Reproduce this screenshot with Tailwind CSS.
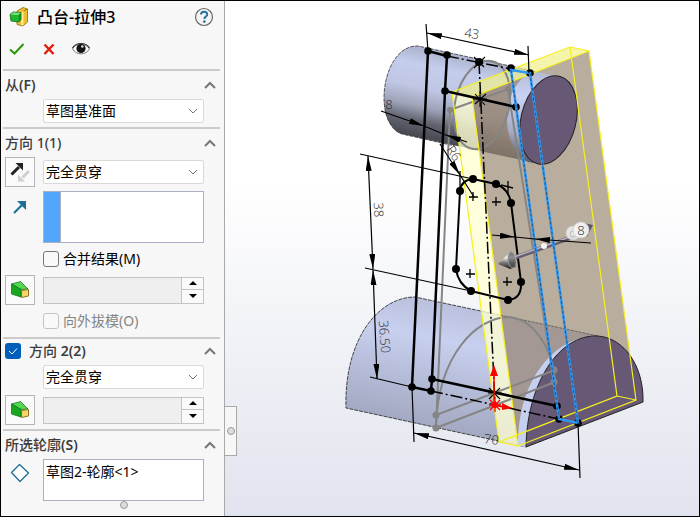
<!DOCTYPE html>
<html lang="zh-CN">
<head>
    <meta charset="UTF-8">
    <meta name="viewport" content="width=device-width, initial-scale=1.0">
    <title>凸台-拉伸3</title>
    <script src="https://cdn.jsdelivr.net/npm/@tailwindcss/browser@4"></script>
</head>
<body class="min-h-screen flex border border-black bg-white text-sm text-black font-['Noto_Sans','Noto_Sans_CJK_SC',sans-serif]">
    <!-- Property manager -->
    <aside class="w-56 shrink-0 flex flex-col bg-[#f7f7f7] border-r border-[#a9a9a9] pl-0.5 pr-1">
        <header class="h-8 flex items-center pl-1.5 pr-1.5">
            <svg class="size-5 shrink-0" viewBox="0 0 20 20">
                <path d="M8 4l6-3.500 4.500 1.500v13l-4.500 4-6-1.500V6z" fill="#f0bd2c" stroke="#8a6a10" stroke-width=".8"/>
                <path d="M12 6l2.500-2v14.500l-2.500-.5z" fill="#ffe790"/>
                <path d="M14.500 4l4-2" stroke="#8a6a10" stroke-width=".8"/>
                <path d="M1 7.500L4 5l8 .5v7L10 15l-8-1z" fill="#22b52e" stroke="#0d6b18" stroke-width=".8"/>
                <path d="M1.500 7.500L4 5.400l7.500.4L9.500 8z" fill="#7be27f"/>
                <path d="M9.600 8l2-2v6.500l-1.800 2z" fill="#148a20"/>
            </svg>
            <h1 class="ml-2 text-base font-medium">凸台-拉伸3</h1>
            <button class="ml-auto size-5" aria-label="帮助">
                <svg class="size-5" viewBox="0 0 20 20">
                    <circle cx="10" cy="10" r="8.500" fill="#f4f4f4" stroke="#666" stroke-width="1.200"/>
                    <path d="M7 7.600c0-3.800 6.200-3.800 6.200-.2 0 2.200-2.800 2.200-2.800 4.600" fill="none" stroke="#22739c" stroke-width="2"/>
                    <circle cx="10.300" cy="14.600" r="1.300" fill="#22739c"/>
                </svg>
            </button>
        </header>
        <div class="h-8 mb-1 flex items-center gap-3.5 pl-1">
            <button class="size-5" aria-label="确定">
                <svg class="size-5" viewBox="0 0 20 20"><path d="M3 10.500l4.500 4L16.500 5" fill="none" stroke="#2d9a0c" stroke-width="2"/></svg>
            </button>
            <button class="size-4" aria-label="取消">
                <svg class="size-4" viewBox="0 0 16 16"><path d="M3.500 3.500l9 9.500M12.500 3.500l-9 9.500" stroke="#e01b0c" stroke-width="2.400"/></svg>
            </button>
            <button class="size-5" aria-label="预览">
                <svg class="size-5" viewBox="0 0 20 20">
                    <path d="M1.500 10C5 3.500 15 3.500 18.500 10c-4 6.500-13 6.500-17 0z" fill="#fff" stroke="#777" stroke-width="1"/>
                    <path d="M1.500 9C5 3 15 3 18.500 9" fill="none" stroke="#333" stroke-width="1.200"/>
                    <circle cx="10" cy="9.500" r="4.600" fill="#151515"/>
                    <circle cx="11.300" cy="7.500" r="1.300" fill="#ddd"/>
                </svg>
            </button>
        </div>

        <section class="border-t-2 border-[#cbcbcb] pb-1 pl-0.5">
            <div class="h-7 flex items-center justify-between pr-1 text-[#3c3c3c]">
                <h2 class="font-medium"><label for="from">从<span class="font-semibold">(F)</span></label></h2>
                <button aria-label="折叠"><svg class="w-3 h-2" viewBox="0 0 12 8"><path d="M1 7l5-5 5 5" fill="none" stroke="#777" stroke-width="2"/></svg></button>
            </div>
            <div class="grid grid-cols-[30px_minmax(0,1fr)] gap-x-2 pr-4">
                <div class="col-start-2 relative">
                    <select id="from" class="appearance-none w-full h-6 px-0.5 bg-white border border-[#d9d9d9] rounded-xs"><option>草图基准面</option></select>
                    <svg class="absolute right-1.5 top-2 w-2.5 h-2 pointer-events-none" viewBox="0 0 10 8"><path d="M1 2l4 4 4-4" fill="none" stroke="#777"/></svg>
                </div>
            </div>
        </section>

        <section class="border-t-2 border-[#cbcbcb] pb-1 pl-0.5">
            <div class="h-7 flex items-center justify-between pr-1 text-[#3c3c3c]">
                <h2 class="font-medium">方向 1(1)</h2>
                <button aria-label="折叠"><svg class="w-3 h-2" viewBox="0 0 12 8"><path d="M1 7l5-5 5 5" fill="none" stroke="#777" stroke-width="2"/></svg></button>
            </div>
            <div class="grid grid-cols-[30px_minmax(0,1fr)] items-center gap-x-2 gap-y-1 pr-4">
                <button class="size-[30px] border border-[#b5b5b5] bg-[#fafafa] grid place-items-center" aria-label="反向">
                    <svg class="size-6" viewBox="0 0 24 24">
                        <path d="M21 11l-6.500 6.500" stroke="#d0d0d0" stroke-width="3"/>
                        <path d="M10 14.500v7h7z" fill="#d0d0d0"/>
                        <path d="M3.500 14.500L11 7" stroke="#222" stroke-width="3"/>
                        <path d="M7.500 3H15v7.500z" fill="#222"/>
                    </svg>
                </button>
                <div class="relative">
                    <select aria-label="方向 1 终止条件" class="appearance-none w-full h-6 px-0.5 bg-white border border-[#d9d9d9] rounded-xs"><option>完全贯穿</option></select>
                    <svg class="absolute right-1.5 top-2 w-2.5 h-2 pointer-events-none" viewBox="0 0 10 8"><path d="M1 2l4 4 4-4" fill="none" stroke="#777"/></svg>
                </div>

                <svg class="size-4 self-start mt-2 justify-self-center" viewBox="0 0 16 16">
                    <path d="M2 14l8-8" stroke="#1d7096" stroke-width="2.200"/>
                    <path d="M5 2h9v9l-3-3-3-3z" fill="#1d7096"/>
                </svg>
                <div class="h-13 flex border border-[#aab0c4] bg-white">
                    <div class="w-4 bg-[#54a6fd]"></div>
                    <ul role="listbox" aria-label="拉伸方向" class="flex-1 border-l border-[#aab0c4]"></ul>
                </div>

                <label class="col-start-2 h-6 flex items-center gap-1">
                    <input type="checkbox" class="appearance-none size-4 border border-[#777] rounded-[3px] bg-[#f9f9f9]">
                    合并结果(M)
                </label>

                <button class="size-[30px] border border-[#b5b5b5] bg-[#fafafa] grid place-items-center" aria-label="拔模">
                    <svg class="size-5" viewBox="0 0 20 20">
                        <path d="M1.500 4l9-2.500 7.500 7.500-7 .5z" fill="#55d850" stroke="#0b6a12" stroke-width=".7"/>
                        <path d="M1.500 4l9.500 5.500V17l-9.500-3z" fill="#17a81e" stroke="#0b6a12" stroke-width=".7"/>
                        <path d="M11.500 10.500l7-1v6.500l-7 1.500z" fill="#f8d568" stroke="#856410" stroke-width=".9"/>
                    </svg>
                </button>
                <div class="h-[27px] flex border border-[#c3c3c3] bg-[#efefef]">
                    <input type="text" disabled aria-label="拔模角度" class="min-w-0 flex-1">
                    <div class="w-[22px] shrink-0 grid grid-rows-2 divide-y divide-[#c3c3c3] border-l border-[#c3c3c3] bg-[#fafafa]">
                        <button class="grid place-items-center" aria-label="增加"><svg class="w-2 h-1" viewBox="0 0 8 4"><path d="M0 4l4-4 4 4z"/></svg></button>
                        <button class="grid place-items-center" aria-label="减少"><svg class="w-2 h-1" viewBox="0 0 8 4"><path d="M0 0l4 4 4-4z"/></svg></button>
                    </div>
                </div>

                <label class="col-start-2 h-6 flex items-center gap-1 text-[#858585]">
                    <input type="checkbox" disabled class="appearance-none size-4 border border-[#c4c4c4] rounded-[3px] bg-[#f9f9f9]">
                    向外拔模(O)
                </label>
            </div>
        </section>

        <section class="border-t-2 border-[#cbcbcb] pb-1 pl-0.5">
            <div class="h-6 flex items-center justify-between pr-1 text-[#3c3c3c]">
                <h2 class="font-medium">
                    <label class="flex items-center gap-2">
                        <span class="grid">
                            <input type="checkbox" checked class="appearance-none size-4 rounded-[3px] bg-[#005fb8] col-start-1 row-start-1">
                            <svg class="size-4 col-start-1 row-start-1 pointer-events-none" viewBox="0 0 16 16"><path d="M4 8l3 3 5-5.500" fill="none" stroke="#fff"/></svg>
                        </span>
                        <span>方向 <span class="font-semibold">2(2)</span></span>
                    </label>
                </h2>
                <button aria-label="折叠"><svg class="w-3 h-2" viewBox="0 0 12 8"><path d="M1 7l5-5 5 5" fill="none" stroke="#777" stroke-width="2"/></svg></button>
            </div>
            <div class="grid grid-cols-[30px_minmax(0,1fr)] items-center gap-x-2 gap-y-1 pr-4">
                <div class="col-start-2 h-7 flex items-center relative">
                    <select aria-label="方向 2 终止条件" class="appearance-none w-full h-6 px-0.5 bg-white border border-[#d9d9d9] rounded-xs"><option>完全贯穿</option></select>
                    <svg class="absolute right-1.5 top-2.5 w-2.5 h-2 pointer-events-none" viewBox="0 0 10 8"><path d="M1 2l4 4 4-4" fill="none" stroke="#777"/></svg>
                </div>
                <button class="size-[30px] border border-[#b5b5b5] bg-[#fafafa] grid place-items-center" aria-label="拔模">
                    <svg class="size-5" viewBox="0 0 20 20">
                        <path d="M1.500 4l9-2.500 7.500 7.500-7 .5z" fill="#55d850" stroke="#0b6a12" stroke-width=".7"/>
                        <path d="M1.500 4l9.500 5.500V17l-9.500-3z" fill="#17a81e" stroke="#0b6a12" stroke-width=".7"/>
                        <path d="M11.500 10.500l7-1v6.500l-7 1.500z" fill="#f8d568" stroke="#856410" stroke-width=".9"/>
                    </svg>
                </button>
                <div class="h-[27px] flex border border-[#c3c3c3] bg-[#efefef]">
                    <input type="text" disabled aria-label="拔模角度" class="min-w-0 flex-1">
                    <div class="w-[22px] shrink-0 grid grid-rows-2 divide-y divide-[#c3c3c3] border-l border-[#c3c3c3] bg-[#fafafa]">
                        <button class="grid place-items-center" aria-label="增加"><svg class="w-2 h-1" viewBox="0 0 8 4"><path d="M0 4l4-4 4 4z"/></svg></button>
                        <button class="grid place-items-center" aria-label="减少"><svg class="w-2 h-1" viewBox="0 0 8 4"><path d="M0 0l4 4 4-4z"/></svg></button>
                    </div>
                </div>
            </div>
        </section>

        <section class="border-t-2 border-[#cbcbcb] pl-0.5">
            <div class="h-7 flex items-center justify-between pr-1 text-[#3c3c3c]">
                <h2 class="font-medium">所选轮廓<span class="font-semibold">(S)</span></h2>
                <button aria-label="折叠"><svg class="w-3 h-2" viewBox="0 0 12 8"><path d="M1 7l5-5 5 5" fill="none" stroke="#777" stroke-width="2"/></svg></button>
            </div>
            <div class="grid grid-cols-[30px_minmax(0,1fr)] gap-x-2 pr-4">
                <svg class="size-5 mt-1 justify-self-center" viewBox="0 0 20 20"><path d="M9.500 1.500l9 8.500-8.500 8.500L1.500 9.500z" fill="#fff" stroke="#1d6f98" stroke-width="1.300" stroke-linejoin="round"/></svg>
                <ul role="listbox" aria-label="所选轮廓" class="h-[42px] px-0.5 pt-0.5 border border-[#aab0c4] bg-white">
                    <li role="option">草图2-轮廓&lt;1&gt;</li>
                </ul>
                <span class="col-start-2 justify-self-center size-2 rounded-full border border-[#999] bg-[#ddd]"></span>
            </div>
        </section>
    </aside>

    <!-- Graphics area -->
    <main class="relative flex-1 min-w-0 bg-linear-to-b from-white from-35% to-[#e1e4ee]">
        <button class="absolute left-0 top-[405px] w-3 h-[50px] grid place-items-center border border-l-0 border-[#a9a9a9] bg-[#f7f7f7]" aria-label="隐藏面板">
            <span class="size-2 rounded-full border border-[#999] bg-[#ddd]"></span>
        </button>
        <svg class="w-full" viewBox="225 1 474 515" fill="none">
            <defs>
                <linearGradient id="tube" gradientUnits="userSpaceOnUse" x1="430" y1="48" x2="411" y2="136">
                    <stop offset="0" stop-color="#a9b0cb"/><stop offset=".2" stop-color="#c5cdec"/><stop offset=".45" stop-color="#c0c7e4"/>
                    <stop offset=".66" stop-color="#9ea3b8"/><stop offset=".82" stop-color="#62656f"/><stop offset="1" stop-color="#454751"/>
                </linearGradient>
                <linearGradient id="tubeBrown" gradientUnits="userSpaceOnUse" x1="512" y1="70" x2="494" y2="156">
                    <stop offset="0" stop-color="#a59a94"/><stop offset=".6" stop-color="#9a8c80"/><stop offset="1" stop-color="#7d7064"/>
                </linearGradient>
                <linearGradient id="tubeEnd" gradientUnits="userSpaceOnUse" x1="540" y1="74" x2="520" y2="162">
                    <stop offset="0" stop-color="#b6bdd9"/><stop offset=".3" stop-color="#c9d2f3"/><stop offset=".7" stop-color="#a4aac2"/><stop offset="1" stop-color="#555864"/>
                </linearGradient>
                <linearGradient id="base" gradientUnits="userSpaceOnUse" x1="450" y1="303" x2="425" y2="425">
                    <stop offset="0" stop-color="#b9c0dc"/><stop offset=".3" stop-color="#c8d0ef"/><stop offset="1" stop-color="#a3a9c2"/>
                </linearGradient>
                <linearGradient id="cone" x1="0" y1="0" x2="0" y2="1">
                    <stop offset="0" stop-color="#999"/><stop offset=".35" stop-color="#f2f2f2"/><stop offset=".65" stop-color="#777"/><stop offset="1" stop-color="#222"/>
                </linearGradient>
                <clipPath id="side"><path d="M472 97L589 51 636 400 518 446z"/></clipPath>
                <marker id="arrow" markerUnits="userSpaceOnUse" markerWidth="16" markerHeight="6" refX="15" refY="3" orient="auto-start-reverse">
                    <path d="M0 0L15 3 0 6z" fill="#000"/>
                </marker>
            </defs>

            <!-- solids -->
            <path d="M418 46C397 45 384 72 384 98C384 118 392 131 402 134L540 164 556 76z" fill="url(#tube)"/>
            <path d="M556 76L418 46C397 45 384 72 384 98C384 118 392 131 402 134L455 146" stroke="#333" stroke-width=".8" stroke-dasharray="4 1"/>
            <path d="M346 408C344 340 378 297 415 297L598 336 526 447z" fill="url(#base)"/>
            <path d="M598 336L415 297C378 297 344 340 346 408L526 447" stroke="#333" stroke-width=".9" stroke-dasharray="4 1"/>

            <!-- plate -->
            <path d="M472 97L589 51 636 400 518 446z" fill="#b9ad9e"/>
            <g clip-path="url(#side)">
                <path d="M418 46L552 76 540 164 402 134z" fill="url(#tubeBrown)"/>
                <path d="M415 297L598 336 526 447 346 408z" fill="#a39894"/>
                <path d="M430 300L598 336" stroke="#555" stroke-width=".8" stroke-dasharray="3 1"/>
            </g>
            <path d="M452 92L472 97 518 446 499 442z" fill="#ffffd2" fill-opacity=".78"/>
            <path d="M452 92L570 47 589 51 472 97z" fill="#f0f08a" fill-opacity=".7"/>

            <!-- ends standing out of the plate -->
            <path d="M556 76L537 72C517 74 507 98 507 118C507 142 517 156 528 162L540 164z" fill="url(#tubeEnd)"/>
            <ellipse cx="548.500" cy="120" rx="27.500" ry="45" transform="rotate(14 548.500 120)" fill="#675876" stroke="#222"/>
            <path d="M598 336C560 334 517 375 518 446L526 447z" fill="#c6cfef"/>
            <path d="M598 336C558 334 527 385 526 447L643 402C644 366 624 338 598 336z" fill="#675876" stroke="#222"/>

            <!-- reference sketch -->
            <g stroke="#858585" stroke-width="2">
                <ellipse cx="482" cy="105" rx="27" ry="45" transform="rotate(13 482 105)"/>
                <path d="M450 110L436 428M450 110L508 89L554 382"/>
                <path d="M436 424C439 355 476 318 508 317C532 318 552 346 555 380"/>
                <path d="M436 415L555 370M436 428L555 382"/>
            </g>
            <g fill="#858585"><circle cx="450" cy="110" r="3"/><circle cx="508" cy="89" r="3"/><circle cx="436" cy="415" r="3.500"/><circle cx="436" cy="428" r="3.500"/><circle cx="554" cy="370" r="3.500"/><circle cx="554" cy="382" r="3.500"/></g>

            <!-- preview edges -->
            <path d="M452 92L570 47 589 51 472 97zM452 92L499 442 518 446 472 97M589 51L636 400 518 446M570 47L617 396 499 442M617 396L636 400" stroke="#f5f01e" stroke-width="1.200"/>

            <!-- sketch -->
            <g stroke="#000" stroke-width="2.500">
                <path d="M447 56L428 51L412 387L431 391L432 379L557 406"/>
                <path d="M447 56L445 91L516 107M445 91L432 379"/>
                <path d="M473 179L496 184Q509 189 511 203L521 282Q522 299 508 300L471 291Q458 284 456 269L460 191Q461 180 473 179z" stroke-width="2"/>
            </g>
            <g stroke="#000" stroke-width="1.500" stroke-dasharray="12 3 2 3">
                <path d="M447 56L511 69M479 62L495 404M431 391L559 419"/>
            </g>
            <path d="M475 94l10 11M486 94l-11 10M480 91v16M473 99h14M474 57l10 10M485 57l-11 11M489 388l11 11M500 388l-11 11M488 393h14" stroke="#000" stroke-width="1.100"/>
            <g fill="#000">
                <circle cx="428" cy="51" r="3.800"/><circle cx="447" cy="55" r="3.800"/><circle cx="479" cy="62" r="4"/><circle cx="511" cy="68" r="3.800"/><circle cx="530" cy="73" r="3.800"/>
                <circle cx="445" cy="91" r="3.800"/><circle cx="516" cy="107" r="3.800"/><circle cx="412" cy="387" r="3.800"/><circle cx="431" cy="391" r="3.800"/><circle cx="432" cy="379" r="3.800"/>
                <circle cx="557" cy="406" r="3.800"/><circle cx="559" cy="419" r="3.800"/><circle cx="578" cy="423" r="3.800"/>
                <circle cx="473" cy="179" r="4"/><circle cx="496" cy="184" r="4"/><circle cx="511" cy="203" r="4"/><circle cx="521" cy="282" r="4"/>
                <circle cx="508" cy="300" r="4"/><circle cx="471" cy="291" r="4"/><circle cx="456" cy="269" r="4"/><circle cx="460" cy="191" r="4"/>
            </g>
            <path d="M469 197h9M473 192v9M492 202h9M496 197v9M466 274h9M470 269v9M503 282h9M507 277v9M501 185l12 3M508 181v14M460 171v20" stroke="#000" stroke-width="1.300"/>

            <!-- drag handle rod -->
            <path d="M514 258L575 236" stroke="#685c70" stroke-width="4.500"/>
            <path d="M514 257L575 235" stroke="#b9b4be" stroke-width="1.500"/>

            <!-- selected contour -->
            <path d="M511 70L530 73 578 423 559 419z" stroke="#2d98f5" stroke-width="2.500"/>
            <path d="M511 70L559 419M530 73L578 423" stroke="#26415c" stroke-width=".8" stroke-dasharray="3 2"/>

            <!-- dimensions -->
            <g stroke="#000" stroke-width="1.200">
                <path d="M426 24L428 51M528 46L529 73M360 154L473 179M365 268L471 291M370 377L412 387M412 387L414 442M578 423L580 478"/>
                <path d="M427 33L529 55" marker-start="url(#arrow)" marker-end="url(#arrow)"/>
                <path d="M368 156L373 269" marker-start="url(#arrow)" marker-end="url(#arrow)"/>
                <path d="M373 270L377 379" marker-start="url(#arrow)" marker-end="url(#arrow)"/>
                <path d="M414 433L579 470" marker-start="url(#arrow)" marker-end="url(#arrow)"/>
                <path d="M381 111L424 126" marker-end="url(#arrow)"/>
                <path d="M467 142L446 135" marker-end="url(#arrow)"/>
                <path d="M424 126L446 135M515 237L535 239M460 175L474 197"/>
                <path d="M440 144L460 175" marker-end="url(#arrow)"/>
                <path d="M492 235L515 237" marker-end="url(#arrow)"/>
                <path d="M591 243L535 239" marker-end="url(#arrow)"/>
            </g>

            <!-- drag handle ends -->
            <path d="M498 264L511 251Q517 253 516 267L510 269z" fill="url(#cone)"/>
            <ellipse cx="512" cy="260" rx="4" ry="8" transform="rotate(-8 512 260)" fill="#4c4c4c" fill-opacity=".6" stroke="#aaa" stroke-width=".7"/>
            <path d="M593 225L583 223 587 237z" fill="#5d5563"/>
            <circle cx="544" cy="246" r="3" fill="#f4f4f4"/>
            <circle cx="573" cy="233" r="7" fill="#eee" fill-opacity=".85" stroke="#ccc" stroke-width=".8"/>
            <circle cx="573" cy="234" r="3" stroke="#bbb"/>
            <circle cx="581" cy="230" r="8" fill="#f4f4f4" fill-opacity=".95" stroke="#ccc" stroke-width=".8"/>

            <g fill="#2b2b2b" text-anchor="middle" class="font-light text-[13px] font-['Open_Sans',sans-serif]">
                <text transform="translate(471 38) rotate(10)">43</text>
                <text x="389" y="109">8</text>
                <text transform="translate(450 156) rotate(55)">R6</text>
                <text transform="translate(374 210) rotate(88)">38</text>
                <text transform="translate(380 337) rotate(86)">36.50</text>
                <text transform="translate(491 444) rotate(6)">70</text>
                <text x="581" y="235">8</text>
            </g>

            <!-- origin -->
            <g stroke="#f00" fill="#f00">
                <path d="M494 404V376M495 405l8 2" stroke-width="1.500"/>
                <path d="M494 365l4 11h-8zM512 408l-10-5v7z" stroke="none"/>
                <path d="M490 400l10 10M500 400l-10 10M495 398v14M489 405h12" stroke-width="1.300"/>
                <circle cx="495" cy="405" r="3" stroke="none"/>
            </g>
        </svg>
    </main>
</body>
</html>
